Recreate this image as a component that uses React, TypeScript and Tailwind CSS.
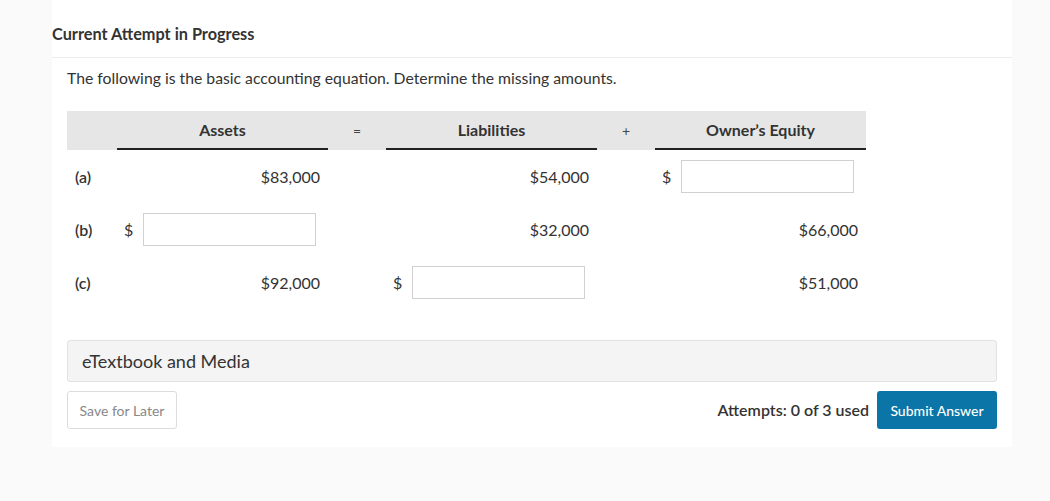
import React from "react";

const font = { fontFamily: "Lato, 'Noto Sans', sans-serif" };

function Input() {
  return <div className="w-[173px] h-[33px] border border-[#d0d0d0] bg-white" />;
}

function DollarInput() {
  return (
    <div className="flex items-center pl-[7px]">
      <span className="w-[19px] text-[16px] text-[#333]">$</span>
      <Input />
    </div>
  );
}

function Value({ v }: { v: string }) {
  return <div className="w-full text-right pr-[8px] text-[16px] text-[#333]">{v}</div>;
}

export default function App() {
  const rows: { label: string; a: React.ReactNode; l: React.ReactNode; o: React.ReactNode }[] = [
    { label: "(a)", a: <Value v="$83,000" />, l: <Value v="$54,000" />, o: <DollarInput /> },
    { label: "(b)", a: <DollarInput />, l: <Value v="$32,000" />, o: <Value v="$66,000" /> },
    { label: "(c)", a: <Value v="$92,000" />, l: <DollarInput />, o: <Value v="$51,000" /> },
  ];
  return (
    <div className="min-h-[501px] bg-[#fafafa]" style={font}>
      <div className="ml-[52px] w-[960px] bg-white pb-[18px]">
        <div className="h-[58px] border-b border-[#ececec] flex items-end pb-[12px]">
          <span className="text-[16.3px] font-bold text-[#333] leading-[22px]">Current Attempt in Progress</span>
        </div>
        <div className="px-[15px]">
          <p className="mt-[9px] text-[15.75px] text-[#333] leading-[22px]">
            The following is the basic accounting equation. Determine the missing amounts.
          </p>
          <div className="mt-[22px] grid grid-cols-[50px_211px_58px_211px_58px_211px] w-[799px]">
            <div className="h-[39px] bg-[#e6e6e6]" />
            <div className="h-[39px] bg-[#e6e6e6] border-b-2 border-[#222] flex items-center justify-center text-[16px] font-bold text-[#333]">Assets</div>
            <div className="h-[39px] bg-[#e6e6e6] flex items-center justify-center text-[14px] text-[#444]">=</div>
            <div className="h-[39px] bg-[#e6e6e6] border-b-2 border-[#222] flex items-center justify-center text-[16px] font-bold text-[#333]">Liabilities</div>
            <div className="h-[39px] bg-[#e6e6e6] flex items-center justify-center text-[14px] text-[#444]">+</div>
            <div className="h-[39px] bg-[#e6e6e6] border-b-2 border-[#222] flex items-center justify-center text-[16px] font-bold text-[#333]">Owner’s Equity</div>
            {rows.map((r) => (
              <React.Fragment key={r.label}>
                <div className="h-[53px] flex items-center pl-[8px] text-[16px] font-semibold text-[#333]">{r.label}</div>
                <div className="h-[53px] flex items-center">{r.a}</div>
                <div className="h-[53px]" />
                <div className="h-[53px] flex items-center">{r.l}</div>
                <div className="h-[53px]" />
                <div className="h-[53px] flex items-center">{r.o}</div>
              </React.Fragment>
            ))}
          </div>
          <div className="mt-[31px] h-[42px] rounded-[3px] border border-[#e2e2e2] bg-[#f4f4f4] flex items-center px-[14px] text-[18px] text-[#333]">
            eTextbook and Media
          </div>
          <div className="mt-[9px] flex items-center justify-between">
            <button className="h-[38px] w-[110px] rounded-[3px] border border-[#dcdcdc] bg-white text-[14px] text-[#888]">Save for Later</button>
            <div className="flex items-center">
              <span className="text-[16px] font-semibold text-[#333] mr-[8px]">Attempts: 0 of 3 used</span>
              <button className="h-[38px] w-[120px] rounded-[3px] bg-[#0a75a6] text-[14px] font-medium text-white">Submit Answer</button>
            </div>
          </div>
        </div>
      </div>
    </div>
  );
}
